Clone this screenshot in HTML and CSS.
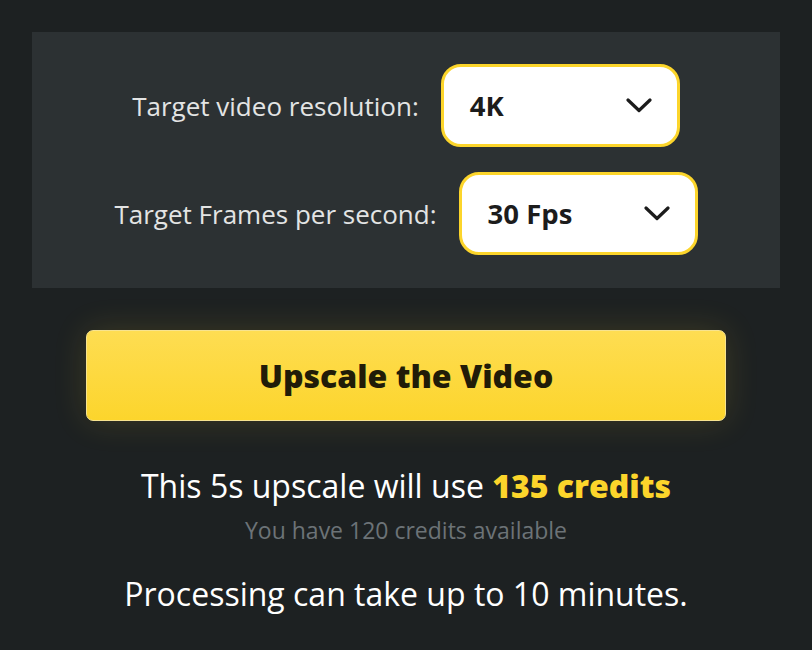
FILE: index.html
```html
<!DOCTYPE html>
<html lang="en">
<head>
<meta charset="utf-8">
<title>Upscale</title>
<link rel="stylesheet" href="styles.css">
</head>
<body>
<div class="page">
  <section class="panel">
    <div class="row">
      <label class="label">Target video resolution:</label>
      <div class="select">
        <span class="value">4K</span>
        <svg class="chev" width="26" height="15" viewBox="0 0 26 15"><path d="M2 2 L13 12.5 L24 2" fill="none" stroke="#1c1c1c" stroke-width="3.2" stroke-linecap="round" stroke-linejoin="round"/></svg>
      </div>
    </div>
    <div class="row">
      <label class="label">Target Frames per second:</label>
      <div class="select">
        <span class="value">30 Fps</span>
        <svg class="chev" width="26" height="15" viewBox="0 0 26 15"><path d="M2 2 L13 12.5 L24 2" fill="none" stroke="#1c1c1c" stroke-width="3.2" stroke-linecap="round" stroke-linejoin="round"/></svg>
      </div>
    </div>
  </section>
  <button class="cta">Upscale the Video</button>
  <p class="usage">This 5s upscale will use <strong class="credits">135 credits</strong></p>
  <p class="available">You have 120 credits available</p>
  <p class="note">Processing can take up to 10 minutes.</p>
</div>
</body>
</html>
```
FILE: styles.css
```css
* { box-sizing: border-box; }
html, body { margin: 0; padding: 0; }
body {
  background: #1d2122;
  font-family: "Open Sans", "DejaVu Sans", sans-serif;
  width: 812px;
  height: 650px;
  overflow: hidden;
}
.page {
  padding: 32px 32px 0 32px;
  display: flex;
  flex-direction: column;
  align-items: center;
}
.panel {
  width: 748px;
  background: #2c3133;
  padding: 32px 0 33px 0;
  display: flex;
  flex-direction: column;
  align-items: center;
  gap: 25px;
}
.row {
  display: flex;
  align-items: center;
  gap: 22px;
}
.label {
  color: #e3e4e4;
  font-size: 26px;
  font-weight: 400;
}
.select {
  width: 239px;
  height: 83px;
  background: #ffffff;
  border: 3px solid #fcd52b;
  border-radius: 20px;
  display: flex;
  align-items: center;
  justify-content: space-between;
  padding: 0 25px 0 26px;
}
.value {
  font-size: 27.5px;
  font-weight: 700;
  color: #1c1c1c;
}
.chev { display: block; }
.cta {
  margin-top: 42px;
  width: 640px;
  height: 91px;
  border: 1px solid #f7e38f;
  border-radius: 7px;
  background: linear-gradient(180deg, #fedd52 0%, #fcd52c 100%);
  box-shadow: 0 0 34px rgba(252, 213, 43, 0.14);
  font-family: "Open Sans", "DejaVu Sans", sans-serif;
  font-weight: 800;
  font-size: 32px;
  color: #211c08;
  padding: 0;
}
.usage {
  margin: 45px 0 0 0;
  color: #ffffff;
  font-size: 32px;
  line-height: 40px;
}
.credits {
  color: #fcd52b;
  font-weight: 800;
}
.available {
  margin: 9px 0 0 0;
  color: #6c7377;
  font-size: 23px;
  line-height: 30px;
}
.note {
  margin: 29px 0 0 0;
  color: #ffffff;
  font-size: 32px;
  line-height: 40px;
}
```
